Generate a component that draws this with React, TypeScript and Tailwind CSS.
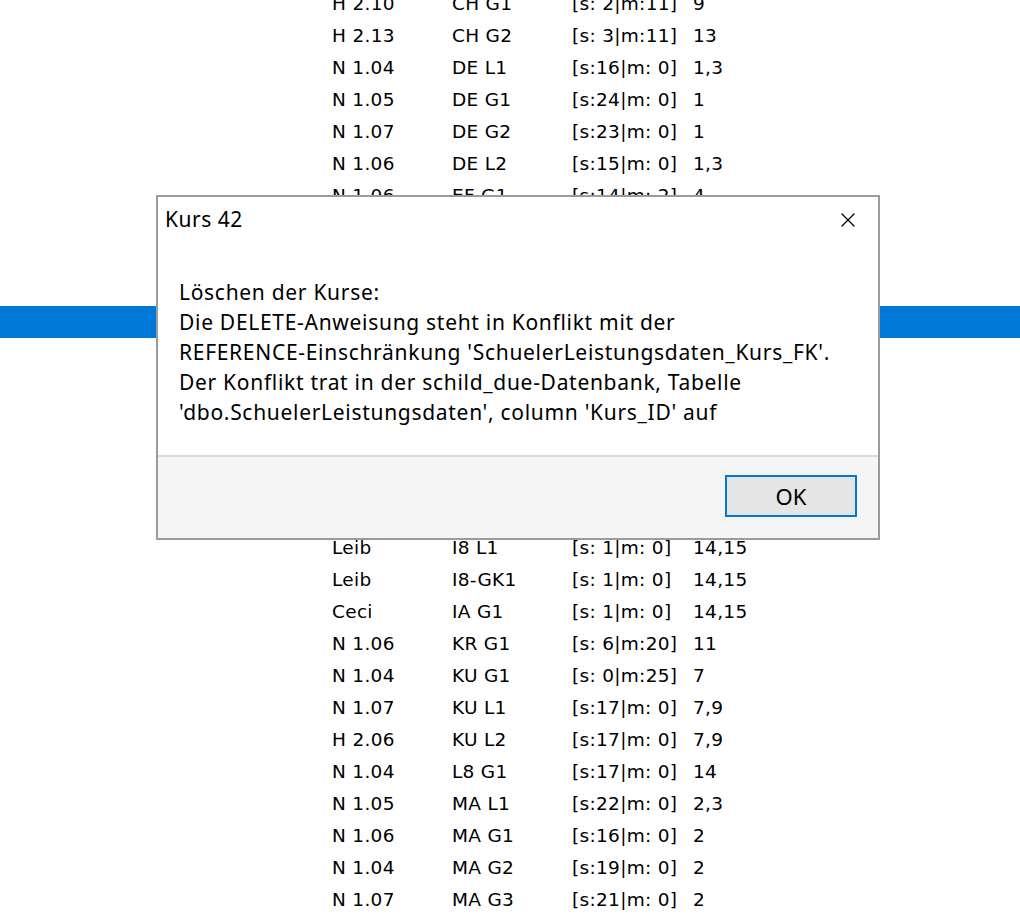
import { X } from "lucide-react";

type Row = [string, string, string, string];

const ROWS: Row[] = [
  ["H 2.10", "CH G1", "[s: 2|m:11]", "9"],
  ["H 2.13", "CH G2", "[s: 3|m:11]", "13"],
  ["N 1.04", "DE L1", "[s:16|m: 0]", "1,3"],
  ["N 1.05", "DE G1", "[s:24|m: 0]", "1"],
  ["N 1.07", "DE G2", "[s:23|m: 0]", "1"],
  ["N 1.06", "DE L2", "[s:15|m: 0]", "1,3"],
  ["N 1.06", "EF G1", "[s:14|m: 2]", "4"],
  ["N 1.05", "EF G2", "[s:12|m: 3]", "4"],
  ["N 1.04", "EK G1", "[s:18|m: 0]", "5"],
  ["H 2.06", "EK G2", "[s:17|m: 0]", "5"],
  ["N 1.07", "EK L1", "[s:16|m: 0]", "5,6"],
  ["N 1.06", "ER G1", "[s: 9|m: 0]", "11"],
  ["H 2.10", "GE G1", "[s:19|m: 0]", "8"],
  ["H 2.13", "GE L1", "[s:14|m: 0]", "8,10"],
  ["N 1.05", "IF G1", "[s:11|m: 0]", "12"],
  ["N 1.04", "IF G2", "[s:10|m: 0]", "12"],
  ["Leib", "I8 G1", "[s: 1|m: 0]", "14,15"],
  ["Leib", "I8 L1", "[s: 1|m: 0]", "14,15"],
  ["Leib", "I8-GK1", "[s: 1|m: 0]", "14,15"],
  ["Ceci", "IA G1", "[s: 1|m: 0]", "14,15"],
  ["N 1.06", "KR G1", "[s: 6|m:20]", "11"],
  ["N 1.04", "KU G1", "[s: 0|m:25]", "7"],
  ["N 1.07", "KU L1", "[s:17|m: 0]", "7,9"],
  ["H 2.06", "KU L2", "[s:17|m: 0]", "7,9"],
  ["N 1.04", "L8 G1", "[s:17|m: 0]", "14"],
  ["N 1.05", "MA L1", "[s:22|m: 0]", "2,3"],
  ["N 1.06", "MA G1", "[s:16|m: 0]", "2"],
  ["N 1.04", "MA G2", "[s:19|m: 0]", "2"],
  ["N 1.07", "MA G3", "[s:21|m: 0]", "2"],
];

const SELECTED = 10;

const MESSAGE = [
  "Löschen der Kurse:",
  "Die DELETE-Anweisung steht in Konflikt mit der",
  "REFERENCE-Einschränkung 'SchuelerLeistungsdaten_Kurs_FK'.",
  "Der Konflikt trat in der schild_due-Datenbank, Tabelle",
  "'dbo.SchuelerLeistungsdaten', column 'Kurs_ID' auf",
];

function CourseRow({ row, selected }: { row: Row; selected: boolean }) {
  return (
    <div
      className={
        selected
          ? "flex h-[32px] items-center bg-[#0078d7] pl-[332px] pt-[3px] text-white"
          : "flex h-[32px] items-center pl-[332px] pt-[3px] text-black"
      }
    >
      <span className="w-[120px] whitespace-pre">{row[0]}</span>
      <span className="w-[120px] whitespace-pre">{row[1]}</span>
      <span className="w-[121px] whitespace-pre">{row[2]}</span>
      <span className="whitespace-pre">{row[3]}</span>
    </div>
  );
}

export default function App() {
  return (
    <div className="relative h-[918px] w-[1020px] overflow-hidden bg-white">
      {/* course list behind the message box */}
      <div className="mt-[-14px] font-['DejaVu_Sans',sans-serif] text-[18.5px] tracking-[0.3px]">
        {ROWS.map((row, i) => (
          <CourseRow key={i} row={row} selected={i === SELECTED} />
        ))}
      </div>

      {/* error dialog */}
      <div className="absolute left-[156px] top-[195px] flex h-[345px] w-[724px] flex-col border-2 border-[#9b9b9b] bg-white font-['Noto_Sans',sans-serif] text-black">
        <div className="flex h-[46px] items-center justify-between pl-[7px] pr-[18px]">
          <span className="text-[21px] tracking-[0.5px]">Kurs 42</span>
          <X size={24} strokeWidth={1.3} className="text-black" />
        </div>
        <div className="flex-1 pl-[21px] pt-[34px] text-[21px] leading-[30px] tracking-[0.7px]">
          {MESSAGE.map((line, i) => (
            <div key={i} className="whitespace-pre">
              {line}
            </div>
          ))}
        </div>
        <div className="flex h-[83px] items-start justify-end border-t-2 border-[#dadada] bg-[#f5f5f5] pr-[21px] pt-[18px]">
          <button className="flex h-[42px] w-[132px] items-center justify-center border-2 border-[#0078d7] bg-[#e5e5e5] text-[22px] text-black">
            OK
          </button>
        </div>
      </div>
    </div>
  );
}
